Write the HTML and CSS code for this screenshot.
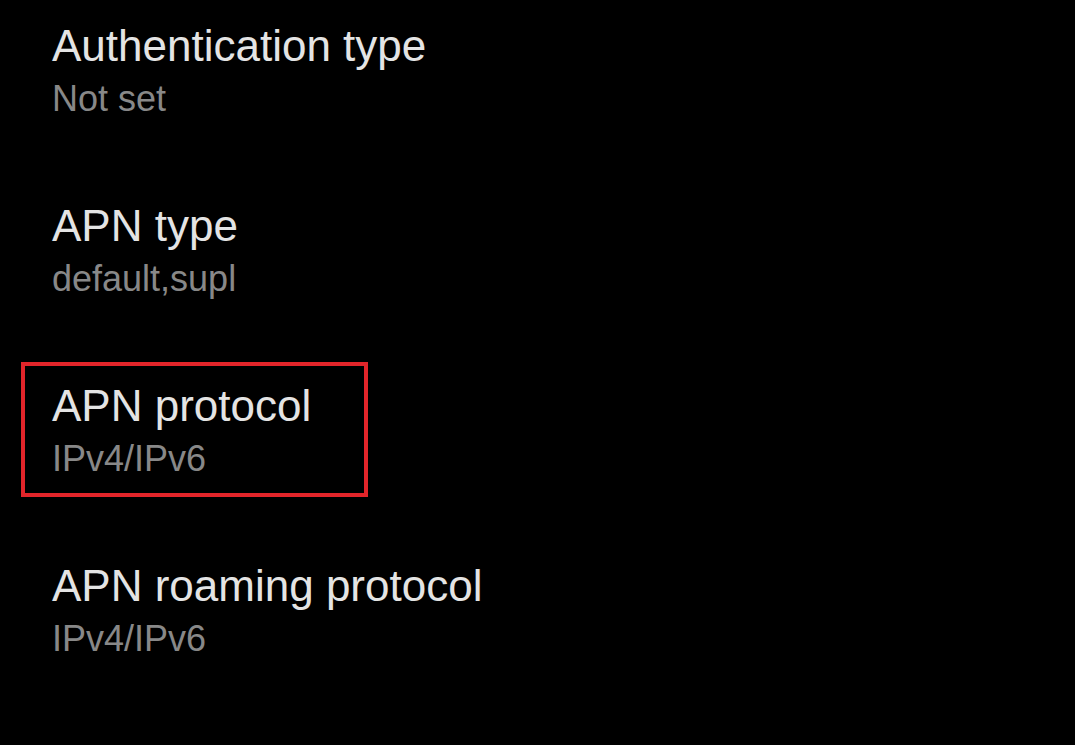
FILE: index.html
```html
<!DOCTYPE html>
<html lang="en">
<head>
    <meta charset="UTF-8">
    <meta name="viewport" content="width=device-width, initial-scale=1.0">
    <title>APN settings</title>
    <link rel="stylesheet" href="styles.css">
</head>
<body>
    <div class="settings-list">
        <div class="row">
            <div class="entry">
                <div class="title">Authentication type</div>
                <div class="summary">Not set</div>
            </div>
        </div>
        <div class="row">
            <div class="entry">
                <div class="title">APN type</div>
                <div class="summary">default,supl</div>
            </div>
        </div>
        <div class="row">
            <div class="entry marked">
                <div class="title">APN protocol</div>
                <div class="summary">IPv4/IPv6</div>
            </div>
        </div>
        <div class="row">
            <div class="entry">
                <div class="title">APN roaming protocol</div>
                <div class="summary">IPv4/IPv6</div>
            </div>
        </div>
    </div>
</body>
</html>
```

FILE: styles.css
```css
body {
    margin: 0;
    background: #000;
    font-family: "Liberation Sans", Arial, sans-serif;
}

.settings-list {
    padding: 2px 0 0 21px;
}

.row {
    height: 180px;
}

.entry {
    display: inline-block;
    box-sizing: border-box;
    padding: 19px 0 11px 31px;
}

.entry.marked {
    width: 347px;
    box-shadow: inset 0 0 0 4px #e2252a;
}

.title {
    font-size: 44px;
    line-height: 50px;
    color: #e4e4e4;
    white-space: nowrap;
}

.summary {
    font-size: 36px;
    line-height: 55px;
    color: #888;
    white-space: nowrap;
}
```
